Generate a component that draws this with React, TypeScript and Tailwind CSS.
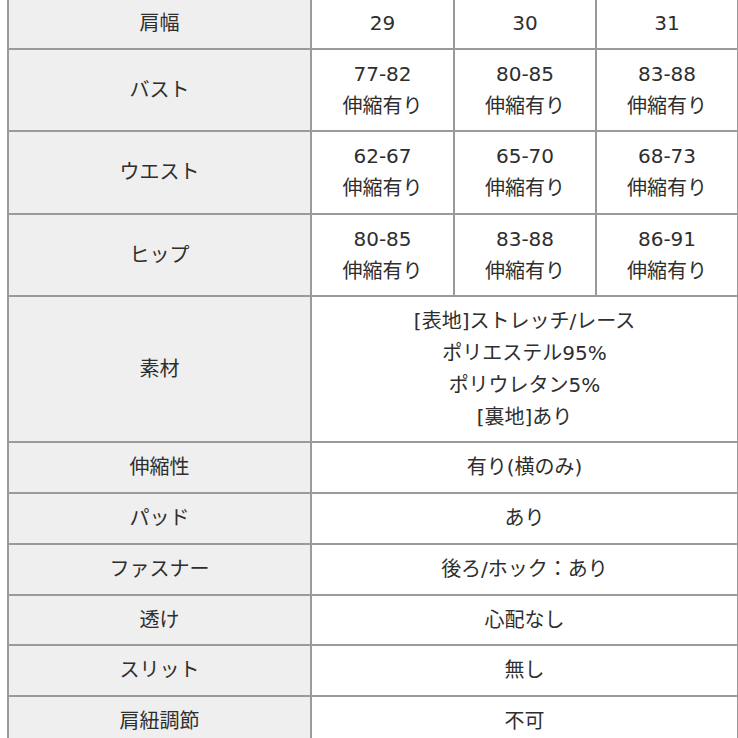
import React from 'react';

const sizes = [
  { label: '肩幅', values: [['29'], ['30'], ['31']] },
  { label: 'バスト', values: [['77-82', '伸縮有り'], ['80-85', '伸縮有り'], ['83-88', '伸縮有り']] },
  { label: 'ウエスト', values: [['62-67', '伸縮有り'], ['65-70', '伸縮有り'], ['68-73', '伸縮有り']] },
  { label: 'ヒップ', values: [['80-85', '伸縮有り'], ['83-88', '伸縮有り'], ['86-91', '伸縮有り']] },
];

const details = [
  { label: '素材', lines: ['[表地]ストレッチ/レース', 'ポリエステル95%', 'ポリウレタン5%', '[裏地]あり'] },
  { label: '伸縮性', lines: ['有り(横のみ)'] },
  { label: 'パッド', lines: ['あり'] },
  { label: 'ファスナー', lines: ['後ろ/ホック：あり'] },
  { label: '透け', lines: ['心配なし'] },
  { label: 'スリット', lines: ['無し'] },
  { label: '肩紐調節', lines: ['不可'] },
];

const cell = 'border-2 border-[#9a9a9a] text-center align-middle pt-[9px] pb-[8px] px-1 leading-[31.75px]';

export default function App() {
  return (
    <div className="w-[738px] h-[738px] overflow-hidden bg-white">
      <div
        className="pl-[7px] -mt-[3px] text-[20px] text-[#2e2e2e]"
        style={{ fontFamily: '"DejaVu Sans", "Noto Sans CJK JP", sans-serif' }}
      >
        <table className="table-fixed border-collapse w-[730px]">
          <colgroup>
            <col className="w-[303px]" />
            <col className="w-[143px]" />
            <col className="w-[142px]" />
            <col className="w-[142px]" />
          </colgroup>
          <tbody>
            {sizes.map((row) => (
              <tr key={row.label}>
                <td className={`${cell} bg-[#efefef]`}>{row.label}</td>
                {row.values.map((v, i) => (
                  <td key={i} className={cell}>
                    {v.map((line) => (
                      <div key={line}>{line}</div>
                    ))}
                  </td>
                ))}
              </tr>
            ))}
            {details.map((row) => (
              <tr key={row.label}>
                <td className={`${cell} bg-[#efefef]`}>{row.label}</td>
                <td colSpan={3} className={cell}>
                  {row.lines.map((line) => (
                    <div key={line}>{line}</div>
                  ))}
                </td>
              </tr>
            ))}
          </tbody>
        </table>
      </div>
    </div>
  );
}
